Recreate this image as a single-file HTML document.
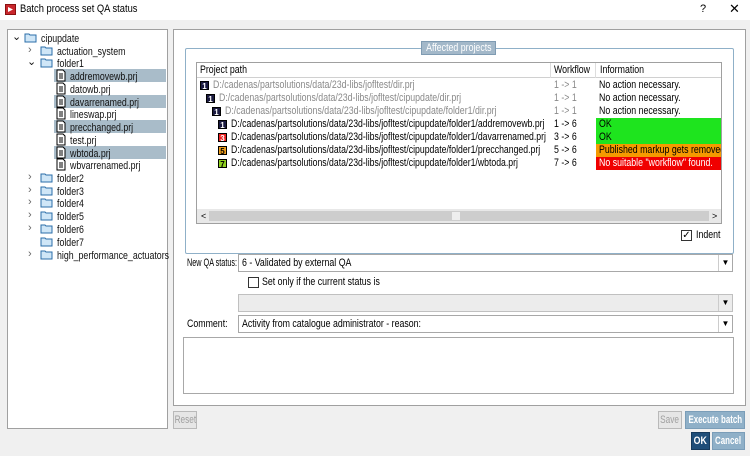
<!DOCTYPE html>
<html><head><meta charset="utf-8"><style>
*{box-sizing:border-box;margin:0;padding:0}
body{width:750px;height:456px;background:#f0f0f0;font-family:"Liberation Sans",sans-serif;font-size:11px;color:#000;position:relative;overflow:hidden}
.a{position:absolute;white-space:nowrap}
.s{display:inline-block;transform:scaleX(.8);transform-origin:0 50%}
.tree .r{position:absolute;height:13px;line-height:13px;white-space:nowrap;color:#111}
.sel{background:#a9bcc9}
.btn{position:absolute;height:18px;display:flex;align-items:center;justify-content:center;white-space:nowrap;border:1px solid #b9b9b9;font-size:11px}
.btn .s{transform-origin:50% 50%}
.combo{position:absolute;left:238px;width:495px;height:18px;background:#fff;border:1px solid #a8a8a8;line-height:16px;padding-left:3px;white-space:nowrap}
.combo .ar{position:absolute;right:0;top:0;width:14px;height:16px;border-left:1px solid #ccc;text-align:center;font-size:8px;line-height:16px}
.tr{position:absolute;left:0;width:525px;height:13px;line-height:13px}
.badge{display:inline-block;width:9px;height:9px;font-size:8px;line-height:9px;text-align:center;color:#fff;font-weight:bold;vertical-align:middle;margin-right:4px;border:1px solid #000}
</style></head><body>
<div class="a" style="left:0;top:0;width:750px;height:20px;background:#fff"></div>
<div class="a" style="left:5px;top:4px;width:11px;height:11px;background:#c8262c;border:1px solid #8a1010"><div style="position:absolute;left:2px;top:2px;width:5px;height:5px;background:#fff;clip-path:polygon(0 0,100% 50%,0 100%)"></div></div>
<div class="a" style="left:20px;top:3px;font-size:11px"><span class="s" style="transform:scaleX(.85)">Batch process set QA status</span></div>
<div class="a" style="left:700px;top:3px">?</div>
<div class="a" style="left:729px;top:1px;font-size:13px">✕</div>

<div class="a tree" style="left:7px;top:29px;width:161px;height:400px;background:#fff;border:1px solid #a0a0a0">
 <svg width="0" height="0" style="position:absolute"><defs>
  <g id="fo"><path d="M1 3h4l1 1h6v7H1z" fill="#cfe6f7" stroke="#2b6ea8"/></g>
  <g id="fi"><path d="M2 1h6l2 2v9H2z" fill="#fff" stroke="#000"/><path d="M4 5h4M4 7h4M4 9h4" stroke="#000"/></g>
 </defs></svg>
 <div class="r" style="left:4px;top:1px">⌄</div>
 <div class="r" style="left:16px;top:1px"><svg width="14" height="13" style="vertical-align:-2px"><use href="#fo"/></svg> <span class="s">cipupdate</span></div>
 <div class="r" style="left:20px;top:14px;color:#666">›</div>
 <div class="r" style="left:32px;top:14px"><svg width="14" height="13" style="vertical-align:-2px"><use href="#fo"/></svg> <span class="s">actuation_system</span></div>
 <div class="r" style="left:19px;top:26px">⌄</div>
 <div class="r" style="left:32px;top:26px"><svg width="14" height="13" style="vertical-align:-2px"><use href="#fo"/></svg> <span class="s">folder1</span></div>
 <div class="r sel" style="left:46px;top:39px;width:112px"></div>
 <div class="r sel" style="left:46px;top:65px;width:112px"></div>
 <div class="r sel" style="left:46px;top:90px;width:112px"></div>
 <div class="r sel" style="left:46px;top:116px;width:112px"></div>
 <div class="r" style="left:47px;top:39px"><svg width="12" height="13" style="vertical-align:-2px"><use href="#fi"/></svg> <span class="s">addremovewb.prj</span></div>
 <div class="r" style="left:47px;top:52px"><svg width="12" height="13" style="vertical-align:-2px"><use href="#fi"/></svg> <span class="s">datowb.prj</span></div>
 <div class="r" style="left:47px;top:65px"><svg width="12" height="13" style="vertical-align:-2px"><use href="#fi"/></svg> <span class="s">davarrenamed.prj</span></div>
 <div class="r" style="left:47px;top:77px"><svg width="12" height="13" style="vertical-align:-2px"><use href="#fi"/></svg> <span class="s">lineswap.prj</span></div>
 <div class="r" style="left:47px;top:90px"><svg width="12" height="13" style="vertical-align:-2px"><use href="#fi"/></svg> <span class="s">precchanged.prj</span></div>
 <div class="r" style="left:47px;top:103px"><svg width="12" height="13" style="vertical-align:-2px"><use href="#fi"/></svg> <span class="s">test.prj</span></div>
 <div class="r" style="left:47px;top:116px"><svg width="12" height="13" style="vertical-align:-2px"><use href="#fi"/></svg> <span class="s">wbtoda.prj</span></div>
 <div class="r" style="left:47px;top:128px"><svg width="12" height="13" style="vertical-align:-2px"><use href="#fi"/></svg> <span class="s">wbvarrenamed.prj</span></div>
 <div class="r" style="left:20px;top:141px;color:#666">›</div><div class="r" style="left:32px;top:141px"><svg width="14" height="13" style="vertical-align:-2px"><use href="#fo"/></svg> <span class="s">folder2</span></div>
 <div class="r" style="left:20px;top:154px;color:#666">›</div><div class="r" style="left:32px;top:154px"><svg width="14" height="13" style="vertical-align:-2px"><use href="#fo"/></svg> <span class="s">folder3</span></div>
 <div class="r" style="left:20px;top:166px;color:#666">›</div><div class="r" style="left:32px;top:166px"><svg width="14" height="13" style="vertical-align:-2px"><use href="#fo"/></svg> <span class="s">folder4</span></div>
 <div class="r" style="left:20px;top:179px;color:#666">›</div><div class="r" style="left:32px;top:179px"><svg width="14" height="13" style="vertical-align:-2px"><use href="#fo"/></svg> <span class="s">folder5</span></div>
 <div class="r" style="left:20px;top:192px;color:#666">›</div><div class="r" style="left:32px;top:192px"><svg width="14" height="13" style="vertical-align:-2px"><use href="#fo"/></svg> <span class="s">folder6</span></div>
 <div class="r" style="left:32px;top:205px"><svg width="14" height="13" style="vertical-align:-2px"><use href="#fo"/></svg> <span class="s">folder7</span></div>
 <div class="r" style="left:20px;top:218px;color:#666">›</div><div class="r" style="left:32px;top:218px"><svg width="14" height="13" style="vertical-align:-2px"><use href="#fo"/></svg> <span class="s">high_performance_actuators</span></div>
</div>

<div class="a" style="left:173px;top:29px;width:573px;height:377px;background:#fff;border:1px solid #a0a0a0"></div>
<div class="a" style="left:185px;top:48px;width:549px;height:206px;border:1px solid #8fb0c8;border-radius:2px"></div>
<div class="a" style="left:421px;top:41px;width:75px;height:14px;background:#a3b8c9;border:1px solid #7f9bb2;color:#fff;display:flex;justify-content:center;align-items:center"><span class="s" style="transform-origin:50% 50%">Affected projects</span></div>

<div class="a" style="left:196px;top:62px;width:526px;height:162px;border:1px solid #a0a0a0;background:#fff">
 <div class="a" style="left:0;top:0;width:524px;height:15px;border-bottom:1px solid #d0d0d0;line-height:14px">
  <span class="a" style="left:3px"><span class="s">Project path</span></span>
  <span class="a" style="left:353px;top:0;height:15px;border-left:1px solid #ddd"></span>
  <span class="a" style="left:357px"><span class="s">Workflow</span></span>
  <span class="a" style="left:398px;top:0;height:15px;border-left:1px solid #ddd"></span>
  <span class="a" style="left:403px"><span class="s">Information</span></span>
 </div>
 <div class="tr" style="top:16px;color:#8a8a8a"><span class="a" style="left:3px"><span class="badge" style="background:#1a1a40">1</span><span class="s">D:/cadenas/partsolutions/data/23d-libs/jofltest/dir.prj</span></span><span class="a" style="left:357px"><span class="s">1 -&gt; 1</span></span><span class="a" style="left:402px;color:#000"><span class="s">No action necessary.</span></span></div>
 <div class="tr" style="top:29px;color:#8a8a8a"><span class="a" style="left:9px"><span class="badge" style="background:#1a1a40">1</span><span class="s">D:/cadenas/partsolutions/data/23d-libs/jofltest/cipupdate/dir.prj</span></span><span class="a" style="left:357px"><span class="s">1 -&gt; 1</span></span><span class="a" style="left:402px;color:#000"><span class="s">No action necessary.</span></span></div>
 <div class="tr" style="top:42px;color:#8a8a8a"><span class="a" style="left:15px"><span class="badge" style="background:#1a1a40">1</span><span class="s">D:/cadenas/partsolutions/data/23d-libs/jofltest/cipupdate/folder1/dir.prj</span></span><span class="a" style="left:357px"><span class="s">1 -&gt; 1</span></span><span class="a" style="left:402px;color:#000"><span class="s">No action necessary.</span></span></div>
 <div class="tr" style="top:55px"><span class="a" style="left:21px"><span class="badge" style="background:#1a1a40">1</span><span class="s" style="transform:scaleX(.79)">D:/cadenas/partsolutions/data/23d-libs/jofltest/cipupdate/folder1/addremovewb.prj</span></span><span class="a" style="left:357px"><span class="s">1 -&gt; 6</span></span><span class="a" style="left:399px;width:125px;height:13px;background:#1ee41e;padding-left:3px"><span class="s">OK</span></span></div>
 <div class="tr" style="top:68px"><span class="a" style="left:21px"><span class="badge" style="background:#e22">3</span><span class="s" style="transform:scaleX(.79)">D:/cadenas/partsolutions/data/23d-libs/jofltest/cipupdate/folder1/davarrenamed.prj</span></span><span class="a" style="left:357px"><span class="s">3 -&gt; 6</span></span><span class="a" style="left:399px;width:125px;height:13px;background:#1ee41e;padding-left:3px"><span class="s">OK</span></span></div>
 <div class="tr" style="top:81px"><span class="a" style="left:21px"><span class="badge" style="background:#f0a020;color:#000">5</span><span class="s" style="transform:scaleX(.79)">D:/cadenas/partsolutions/data/23d-libs/jofltest/cipupdate/folder1/precchanged.prj</span></span><span class="a" style="left:357px"><span class="s">5 -&gt; 6</span></span><span class="a" style="left:399px;width:125px;height:13px;background:#f59a00;padding-left:3px;overflow:hidden"><span class="s">Published markup gets removed.</span></span></div>
 <div class="tr" style="top:94px"><span class="a" style="left:21px"><span class="badge" style="background:#8fd020;color:#000">7</span><span class="s" style="transform:scaleX(.79)">D:/cadenas/partsolutions/data/23d-libs/jofltest/cipupdate/folder1/wbtoda.prj</span></span><span class="a" style="left:357px"><span class="s">7 -&gt; 6</span></span><span class="a" style="left:399px;width:125px;height:13px;background:#f00000;color:#fff;padding-left:3px"><span class="s">No suitable "workflow" found.</span></span></div>
 <div class="a" style="left:0;top:146px;width:524px;height:14px;background:#e8e8e8">
  <span class="a" style="left:4px;top:0;font-size:9px;line-height:14px">&lt;</span>
  <span class="a" style="left:12px;top:2px;width:500px;height:10px;background:#cdcdcd"></span>
  <span class="a" style="left:255px;top:3px;width:8px;height:8px;background:#eee"></span>
  <span class="a" style="left:515px;top:0;font-size:9px;line-height:14px">&gt;</span>
 </div>
</div>
<div class="a" style="left:681px;top:230px;width:11px;height:11px;border:1px solid #333;background:#fff;font-size:10px;line-height:9px;text-align:center">✓</div>
<div class="a" style="left:696px;top:229px"><span class="s">Indent</span></div>

<div class="a" style="left:187px;top:257px"><span class="s" style="transform:scaleX(.66)">New QA status:</span></div>
<div class="combo" style="top:254px"><span class="s">6 - Validated by external QA</span><span class="ar">▼</span></div>
<div class="a" style="left:248px;top:277px;width:11px;height:11px;border:1px solid #333;background:#fff"></div>
<div class="a" style="left:262px;top:276px"><span class="s">Set only if the current status is</span></div>
<div class="combo" style="top:294px;background:#ececec;border-color:#c0c0c0"><span class="ar">▼</span></div>
<div class="a" style="left:187px;top:318px"><span class="s">Comment:</span></div>
<div class="combo" style="top:315px"><span class="s">Activity from catalogue administrator - reason:</span><span class="ar">▼</span></div>
<div class="a" style="left:183px;top:337px;width:551px;height:57px;background:#fff;border:1px solid #a8a8a8"></div>

<div class="btn" style="left:173px;top:411px;width:24px;color:#a0a0a0;background:#e6e6e6"><span class="s" style="transform:scaleX(.75)">Reset</span></div>
<div class="btn" style="left:658px;top:411px;width:24px;color:#a0a0a0;background:#e6e6e6"><span class="s" style="transform:scaleX(.75)">Save</span></div>
<div class="btn" style="left:685px;top:411px;width:60px;color:#fff;background:#8fb0c8;border-color:#7a9db8;font-weight:bold"><span class="s" style="transform:scaleX(.72)">Execute batch</span></div>
<div class="btn" style="left:691px;top:432px;width:19px;color:#fff;background:#1f4e79;border-color:#163a5c;font-weight:bold"><span class="s">OK</span></div>
<div class="btn" style="left:712px;top:432px;width:33px;color:#fff;background:#8fb0c8;border-color:#7a9db8;font-weight:bold"><span class="s" style="transform:scaleX(.72)">Cancel</span></div>
</body></html>
